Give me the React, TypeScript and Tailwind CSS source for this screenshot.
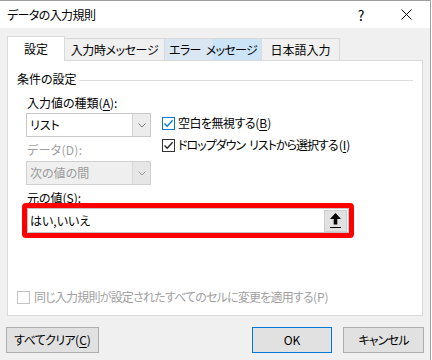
import React from "react";

const Chevron = ({ color = "#7a7a7a" }: { color?: string }) => (
  <svg width="8" height="5" viewBox="0 0 8 5">
    <path d="M0.5 0.5 L4 4 L7.5 0.5" fill="none" stroke={color} strokeWidth="1" />
  </svg>
);

const Check = ({ color }: { color: string }) => (
  <svg width="11" height="11" viewBox="0 0 11 11">
    <path d="M1.5 5.5 L4.2 8.3 L9.6 2.2" fill="none" stroke={color} strokeWidth="1.3" />
  </svg>
);

export default function App() {
  const font =
    "[font-family:'Noto_Sans_CJK_JP','Noto_Sans',sans-serif] [font-feature-settings:'palt'] text-[12px] leading-[18px]";
  return (
    <div className={`w-[432px] h-[360px] bg-white ${font} text-black`}>
      <div className="w-[431px] h-[360px] border-t border-r border-[#a0a0a0] bg-[#f0f0f0] flex flex-col">
        {/* title bar */}
        <div className="h-[27px] bg-white flex items-center pl-[7px] shrink-0">
          <span className="flex-1 tracking-[-0.6px]">データの入力規則</span>
          <span className="w-[20px] text-center text-[14px] mr-[25px]">?</span>
          <span className="w-[20px] flex justify-center mr-[14px]">
            <svg width="11" height="11" viewBox="0 0 11 11">
              <path d="M0.5 0.5 L10.5 10.5 M10.5 0.5 L0.5 10.5" stroke="#000" strokeWidth="1" />
            </svg>
          </span>
        </div>
        {/* tabs */}
        <div className="h-[32px] flex items-end pl-[7px] shrink-0">
          <div className="relative z-10 w-[58px] h-[25px] -mb-px bg-white border border-b-0 border-[#d9d9d9] flex items-center justify-center pb-[1px]">
            設定
          </div>
          <div className="w-[100px] h-[22px] border-t border-r border-[#d9d9d9] flex items-center justify-center tracking-[-0.4px]">
            入力時メッセージ
          </div>
          <div className="w-[97px] h-[22px] border-t border-r border-[#d9d9d9] bg-[linear-gradient(to_right,#dae6f2_50%,#cce4f7_50%)] flex items-center justify-center tracking-[-0.7px]">
            <span>エラー</span>
            <span className="ml-[5px]">メッセージ</span>
          </div>
          <div className="w-[78px] h-[22px] border-t border-r border-[#d9d9d9] flex items-center justify-center">
            日本語入力
          </div>
        </div>
        {/* panel */}
        <div className="ml-[7px] w-[416px] h-[256px] border border-[#d9d9d9] bg-white flex flex-col shrink-0">
          <div className="mt-[9px] h-[18px] flex items-center pl-[9px] pr-[9px]">
            <span>条件の設定</span>
            <div className="flex-1 h-px bg-[#dcdcdc] ml-[2px] mt-[2px]" />
          </div>
          <div className="pl-[18px] flex flex-col">
            <div className="flex mt-[6px] gap-[11px]">
              <div className="w-[125px] flex flex-col">
                <div className="h-[18px] pl-[1px]">
                  入力値の種類(<span className="underline underline-offset-2">A</span>):
                </div>
                <div className="mt-[1px] h-[24px] border border-[#c8c8c8] bg-white flex">
                  <div className="flex-1 flex items-center pl-[3px]">リスト</div>
                  <div className="w-[18px] border-l border-[#d4d4d4] bg-[#ececec] flex items-center justify-center">
                    <Chevron />
                  </div>
                </div>
                <div className="mt-[4px] h-[18px] pl-[1px] text-[#a0a0a0] tracking-[0.3px]">データ(D):</div>
                <div className="mt-[2px] h-[24px] border border-[#d0d0d0] bg-[#efefef] flex text-[#9a9a9a]">
                  <div className="flex-1 flex items-center pl-[3px]">次の値の間</div>
                  <div className="w-[18px] border-l border-[#d8d8d8] bg-[#e6e6e6] flex items-center justify-center">
                    <Chevron color="#9a9a9a" />
                  </div>
                </div>
              </div>
              <div className="flex flex-col pt-[20px] gap-[4px]">
                <div className="h-[18px] flex items-center gap-[3px]">
                  <div className="w-[13px] h-[13px] border border-[#0078d7] bg-white flex items-center justify-center">
                    <Check color="#0078d7" />
                  </div>
                  <span className="tracking-[-0.5px]">
                    空白を無視する<span className="tracking-normal">(<span className="underline underline-offset-2">B</span>)</span>
                  </span>
                </div>
                <div className="h-[18px] flex items-center gap-[3px]">
                  <div className="w-[13px] h-[13px] border border-[#333333] bg-white flex items-center justify-center">
                    <Check color="#222222" />
                  </div>
                  <span className="tracking-[-1px] flex">
                    <span>ドロップダウン</span>
                    <span className="ml-[4px]">リストから選択する</span>
                    <span className="tracking-normal ml-[1px]">(<span className="underline underline-offset-2">I</span>)</span>
                  </span>
                </div>
              </div>
            </div>
            <div className="mt-[5px] h-[16px] leading-[16px] pl-[1px]">元の値(S):</div>
            <div className="-mt-[3px] -ml-[4px] w-[332px] h-[35px] border-[5px] border-[#ff0000] rounded-[4px]">
              <div className="h-full border border-[#c4c4c4] bg-white flex items-center">
                <span className="flex-1 pl-[2px]">はい,いいえ</span>
                <div className="w-[23px] h-[22px] mr-[1px] bg-[#e1e1e1] border border-[#cfcfcf] flex items-center justify-center">
                  <svg width="13" height="17" viewBox="0 0 13 17">
                    <path d="M6.5 1 L1 7 L4.7 7 L4.7 12.5 L8.3 12.5 L8.3 7 L12 7 Z" fill="#000" />
                    <path d="M1 15.5 L12 15.5" stroke="#000" strokeWidth="1" />
                  </svg>
                </div>
              </div>
            </div>
          </div>
          <div className="mt-auto mb-[9px] h-[18px] flex items-center pl-[9px] gap-[4px] text-[#a0a0a0]">
            <div className="w-[13px] h-[13px] border border-[#c4c4c4] bg-white" />
            <span className="tracking-[-0.8px]">
              同じ入力規則が設定されたすべてのセルに変更を適用する<span className="tracking-normal">(P)</span>
            </span>
          </div>
        </div>
        {/* buttons */}
        <div className="mt-[11px] h-[26px] flex shrink-0">
          <div className="ml-[6px] w-[93px] h-[26px] bg-[#e1e1e1] border border-[#adadad] flex items-center justify-center tracking-[-0.6px]">
            すべてクリア<span className="tracking-normal">(<span className="underline underline-offset-2">C</span>)</span>
          </div>
          <div className="ml-[153px] w-[80px] h-[26px] bg-[#e1e1e1] border border-[#0078d7] flex items-center justify-center">
            OK
          </div>
          <div className="ml-[11px] w-[81px] h-[26px] bg-[#e1e1e1] border border-[#adadad] flex items-center justify-center tracking-[-0.8px]">
            キャンセル
          </div>
        </div>
      </div>
    </div>
  );
}
